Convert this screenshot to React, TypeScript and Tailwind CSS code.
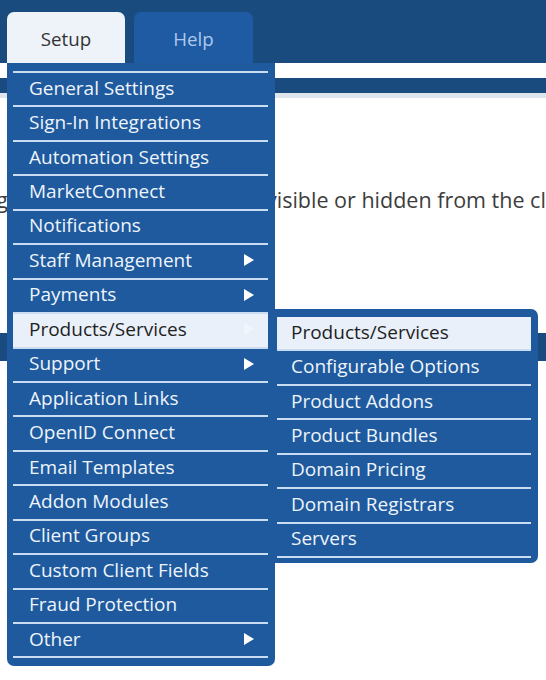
const MAIN_ITEMS: Array<{ label: string; sub?: boolean; active?: boolean }> = [
  { label: "General Settings" },
  { label: "Sign-In Integrations" },
  { label: "Automation Settings" },
  { label: "MarketConnect" },
  { label: "Notifications" },
  { label: "Staff Management", sub: true },
  { label: "Payments", sub: true },
  { label: "Products/Services", sub: true, active: true },
  { label: "Support", sub: true },
  { label: "Application Links" },
  { label: "OpenID Connect" },
  { label: "Email Templates" },
  { label: "Addon Modules" },
  { label: "Client Groups" },
  { label: "Custom Client Fields" },
  { label: "Fraud Protection" },
  { label: "Other", sub: true },
];

const SUB_ITEMS: Array<{ label: string; active?: boolean }> = [
  { label: "Products/Services", active: true },
  { label: "Configurable Options" },
  { label: "Product Addons" },
  { label: "Product Bundles" },
  { label: "Domain Pricing" },
  { label: "Domain Registrars" },
  { label: "Servers" },
];

function Arrow(props: { faint?: boolean }) {
  return (
    <svg viewBox="0 0 10 12" className={props.faint ? "h-[12px] w-[10px] opacity-40" : "h-[12px] w-[10px]"} aria-hidden="true">
      <polygon points="0,0 10,6 0,12" fill="#ffffff" />
    </svg>
  );
}

function MenuRow(props: { label: string; sub?: boolean; active?: boolean; textPad: string }) {
  const base = "flex h-[34.44px] items-center justify-between border-b-2 border-[#c9dcf1] text-[19px] leading-none";
  const tone = props.active ? "bg-[#e9f0fa] text-[#1f1f1f]" : "text-[#eef4fc]";
  return (
    <div className={`${base} ${tone} ${props.textPad}`}>
      <span className="-mt-[2px] whitespace-nowrap">{props.label}</span>
      {props.sub ? (
        <span className="mr-[14px] -mt-[2px]">
          <Arrow faint={props.active} />
        </span>
      ) : null}
    </div>
  );
}

export default function App() {
  return (
    <div className="relative h-[680px] w-[546px] overflow-hidden bg-white font-['Open_Sans',sans-serif]">
      <div className="flex h-[63px] items-end gap-[9px] bg-[#1a4b7e] pl-[7px]">
        <div className="flex h-[51px] w-[118px] items-center justify-center rounded-t-[7px] bg-[#eef3fa] pt-[4px] text-[18.7px] text-[#333]">
          Setup
        </div>
        <div className="flex h-[51px] w-[119px] items-center justify-center rounded-t-[7px] bg-[#1e5ba2] pt-[4px] text-[18.7px] text-[#adc9ee]">
          Help
        </div>
      </div>
      <div className="h-[15px] bg-white" />
      <div className="h-[15px] bg-[#1a4b7e]" />
      <div className="h-[5px] bg-[#dfe5ec]" />

      <div className="mt-[89px] flex h-[26px] items-center whitespace-nowrap text-[21.5px] text-[#3d3d3d]">
        <span className="-ml-[192px] w-[200px] shrink-0 overflow-hidden text-right">Use this setting</span>
        <span className="w-[258px] shrink-0" />
        <span>visible or hidden from the client area.</span>
      </div>

      <div className="mt-[120px] h-[28px] bg-[#1a4b7e]" />

      <div className="absolute left-[7px] top-[63px] w-[268px] rounded-b-[7px] bg-[#1e5a9d] pb-[8px] pl-[6px] pr-[7px] pt-[8px]">
        <div className="border-t-2 border-[#c9dcf1]">
          {MAIN_ITEMS.map((item) => (
            <MenuRow key={item.label} label={item.label} sub={item.sub} active={item.active} textPad="pl-[16px]" />
          ))}
        </div>

        <div className="absolute left-full top-[246px] w-[263px] rounded-r-[7px] bg-[#1e5a9d] pb-[5px] pl-[2px] pr-[7px] pt-[8px]">
          {SUB_ITEMS.map((item) => (
            <MenuRow key={item.label} label={item.label} active={item.active} textPad="pl-[14px]" />
          ))}
        </div>
      </div>
    </div>
  );
}
